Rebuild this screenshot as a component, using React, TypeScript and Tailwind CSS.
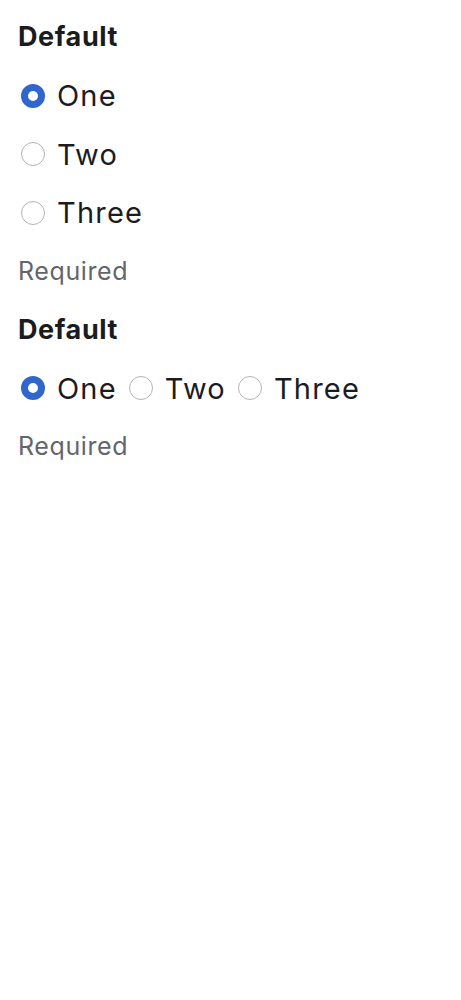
import React from "react";

type RadioProps = {
  label: string;
  checked?: boolean;
};

const Radio: React.FunctionComponent<RadioProps> = ({ label, checked }) => {
  return (
    <label className="flex items-center gap-3 h-[58.5px]">
      {checked ? (
        <span className="w-6 h-6 shrink-0 rounded-full border-[7px] border-[#3067cc] bg-white" />
      ) : (
        <span className="w-6 h-6 shrink-0 rounded-full border border-[#b4b4b8] bg-white" />
      )}
      <span className="text-[29px] tracking-[1.2px] text-[#1c1c1e] leading-none">
        {label}
      </span>
    </label>
  );
};

const options = ["One", "Two", "Three"];

const Heading = () => (
  <div className="flex items-center h-[58.5px] -ml-[3px] text-[27px] font-bold tracking-[0.6px] text-[#1c1c1e]">
    Default
  </div>
);

const Hint = () => (
  <div className="flex items-center h-[58.5px] -ml-[3px] text-[25px] tracking-[0.6px] text-[#64646e]">
    Required
  </div>
);

export default function App() {
  return (
    <div
      className="flex flex-col pl-[21px] pt-[8px] bg-white min-h-screen"
      style={{ fontFamily: "Inter, 'Open Sans', sans-serif" }}
    >
      {/* vertical group */}
      <Heading />
      <div className="flex flex-col">
        {options.map((o, i) => (
          <Radio key={o} label={o} checked={i === 0} />
        ))}
      </div>
      <Hint />

      {/* horizontal group */}
      <Heading />
      <div className="flex gap-3">
        {options.map((o, i) => (
          <Radio key={o} label={o} checked={i === 0} />
        ))}
      </div>
      <Hint />
    </div>
  );
}
